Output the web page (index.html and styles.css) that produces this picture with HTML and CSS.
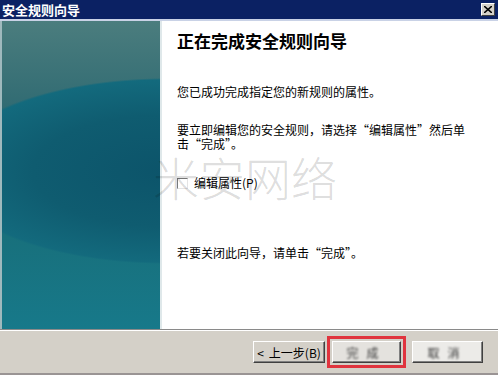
FILE: index.html
```html
<!DOCTYPE html>
<html lang="zh-CN">
<head>
  <meta charset="UTF-8">
  <title>安全规则向导</title>
  <link rel="stylesheet" href="styles.css">
</head>
<body>
  <div class="window">
    <div class="titlebar">
      <span class="title-text">安全规则向导</span>
      <span class="close-btn">
        <svg width="8" height="7" viewBox="0 0 8 7">
          <path d="M0 0 L8 7 M8 0 L0 7" stroke="#000" stroke-width="1.6"/>
        </svg>
      </span>
    </div>

    <div class="main">
      <div class="side-panel"></div>
      <div class="content">
        <h1 class="heading">正在完成安全规则向导</h1>
        <p class="text first">您已成功完成指定您的新规则的属性。</p>
        <p class="text second">要立即编辑您的安全规则，请选择“编辑属性”然后单<br>击“完成”。</p>
        <div class="check-row">
          <span class="checkbox"></span>
          <span class="check-label">编辑属性(P)</span>
        </div>
        <p class="text last">若要关闭此向导，请单击“完成”。</p>
        <div class="watermark">米安网络</div>
      </div>
    </div>

    <div class="footer">
      <div class="btn back-btn"><span class="arrow">&lt;</span>上一步(B)</div>
      <div class="btn finish-btn"><span class="blurred">完成</span></div>
      <div class="btn cancel-btn"><span class="blurred">取消</span></div>
    </div>
  </div>
</body>
</html>
```

FILE: styles.css
```css
* {
  margin: 0;
  padding: 0;
  box-sizing: border-box;
}

body {
  font-family: "Noto Sans CJK SC", "DejaVu Sans", sans-serif;
  background-color: #d4d0c8;
  width: 498px;
  height: 375px;
  overflow: hidden;
}

.window {
  display: flex;
  flex-direction: column;
  width: 498px;
  height: 375px;
}

.titlebar {
  display: flex;
  justify-content: space-between;
  align-items: center;
  height: 19px;
  background-color: #0b2163;
  border-bottom: 2px solid #c9d2e6;
  padding: 0 3px 0 2px;
  box-sizing: content-box;
}

.title-text {
  color: #fff;
  font-weight: bold;
  font-size: 13px;
  line-height: 19px;
}

.close-btn {
  display: flex;
  align-items: center;
  justify-content: center;
  width: 14px;
  height: 13px;
  background-color: #d4d0c8;
  border: 1px solid;
  border-color: #fff #404040 #404040 #fff;
}

.main {
  display: flex;
  height: 309px;
  background-color: #fff;
  border-bottom: 1px solid #8a8a8a;
}

.side-panel {
  width: 162px;
  border-left: 2px solid #9fb9bd;
  border-right: 2px solid #dfe8ea;
  background:
    radial-gradient(ellipse 224px 93px at 165px 150px, #0c546a 0%, #0f5c70 60%, #136a7d 98%, rgba(0, 0, 0, 0) 100%),
    linear-gradient(180deg, #4b7d7e 0%, #2f6a72 30%, #18707c 70%, #17798a 100%);
}

.content {
  position: relative;
  flex: 1;
  padding-left: 15px;
}

.watermark {
  position: absolute;
  left: -9px;
  top: 132px;
  font-size: 46px;
  line-height: 46px;
  font-weight: 300;
  color: rgba(0, 0, 0, 0.15);
  white-space: nowrap;
}

.heading {
  margin-top: 10px;
  font-size: 17px;
  line-height: 20px;
  font-weight: bold;
  color: #000;
}

.text {
  font-size: 12px;
  line-height: 14px;
  color: #000;
}

.text.first {
  margin-top: 34px;
}

.text.second {
  margin-top: 24px;
}

.text.last {
  margin-top: 56px;
}

.check-row {
  display: flex;
  align-items: center;
  gap: 6px;
  margin-top: 25px;
  height: 14px;
}

.checkbox {
  width: 11px;
  height: 11px;
  background-color: #fff;
  border: 1px solid;
  border-color: #7a7a7a #e4e4e4 #e4e4e4 #7a7a7a;
}

.check-label {
  font-size: 12px;
  line-height: 14px;
}

.footer {
  display: flex;
  align-items: center;
  justify-content: flex-end;
  flex: 1;
  padding-right: 15px;
  background-color: #d4d0c8;
  border-top: 1px solid #fff;
  border-bottom: 2px solid #9a9494;
}

.btn {
  display: flex;
  align-items: center;
  justify-content: center;
  height: 22px;
  font-size: 12px;
  background-color: #d4d0c8;
  border: 1px solid;
  border-color: #fff #404040 #404040 #fff;
  box-shadow: inset -1px -1px #808080;
}

.back-btn {
  width: 72px;
}

.arrow {
  margin-right: 5px;
}

.finish-btn {
  width: 69px;
  margin-left: 7px;
  background-color: #e4e2de;
  outline: 3px solid #e0343e;
  outline-offset: 2px;
}

.cancel-btn {
  width: 71px;
  margin-left: 11px;
  background-color: #ecebe8;
}

.blurred {
  filter: blur(0.8px);
  color: #333;
  letter-spacing: 8px;
}
```
